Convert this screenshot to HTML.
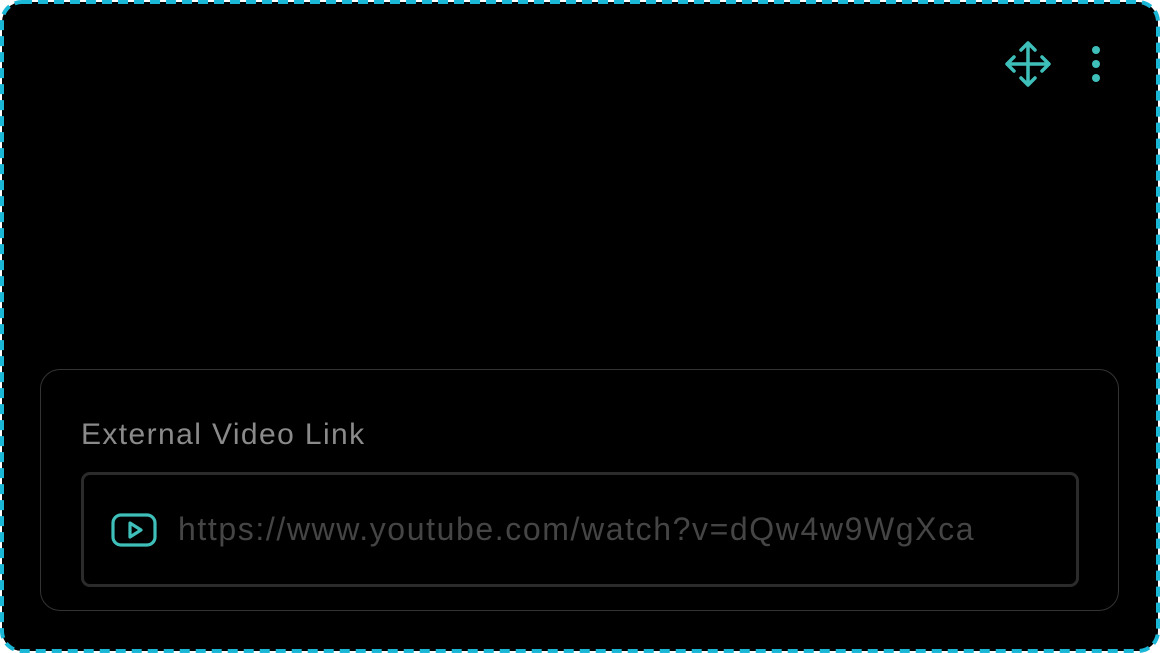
<!DOCTYPE html>
<html><head><style>
html,body{margin:0;padding:0;background:#fff;}
.card{position:absolute;left:40px;top:369px;width:1079px;height:242px;box-sizing:border-box;border:1.5px solid #333;border-radius:20px;}
.label{position:absolute;left:81px;top:418px;font:30px "Liberation Sans",sans-serif;color:#8a8a8a;letter-spacing:1.4px;}
.input{position:absolute;left:81px;top:472px;width:998px;height:115px;box-sizing:border-box;border:3px solid #2b2b2b;border-radius:9px;}
.url{position:absolute;left:178px;top:511px;font:32px "Liberation Sans",sans-serif;color:#454545;letter-spacing:1.6px;}
</style></head><body>
<svg style="position:absolute;left:0;top:0" width="1160" height="653">
<rect x="2" y="2" width="1156" height="649" rx="20" fill="#000" stroke="#1ab8d6" stroke-width="4" stroke-dasharray="10 6"/>
</svg>
<svg style="position:absolute;left:1004px;top:40px" width="48" height="48" viewBox="0 0 48 48" fill="none" stroke="#3fbfba" stroke-width="3.5" stroke-linecap="round" stroke-linejoin="round">
<path d="M24 4V44M4 24H44M17 10L24 3L31 10M17 38L24 45L31 38M10 17L3 24L10 31M38 17L45 24L38 31"/>
</svg>
<svg style="position:absolute;left:1086px;top:42px" width="20" height="44"><g fill="#3fbfba"><circle cx="10" cy="8" r="4"/><circle cx="10" cy="22" r="4"/><circle cx="10" cy="36" r="4"/></g></svg>
<div class="card"></div>
<div class="label">External Video Link</div>
<div class="input"></div>
<svg style="position:absolute;left:110px;top:512px" width="48" height="36" viewBox="0 0 48 36" fill="none" stroke="#3fbfba" stroke-width="3.2" stroke-linejoin="round">
<rect x="3" y="3" width="42" height="30" rx="8"/>
<path d="M20 11V25L31 18Z"/>
</svg>
<div class="url">https://www.youtube.com/watch?v=dQw4w9WgXca</div>
</body></html>
